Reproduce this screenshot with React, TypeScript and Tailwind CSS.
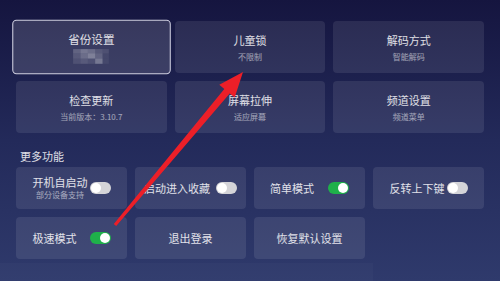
import React from 'react';

const font = { fontFamily: '"Noto Sans CJK SC", "Noto Sans", sans-serif' };

type TopItem = { title: string; sub?: string; mosaic?: boolean; selected?: boolean };

const topItems: TopItem[] = [
  { title: '省份设置', mosaic: true, selected: true },
  { title: '儿童锁', sub: '不限制' },
  { title: '解码方式', sub: '智能解码' },
  { title: '检查更新', sub: '当前版本：3.10.7' },
  { title: '屏幕拉伸', sub: '适应屏幕' },
  { title: '频道设置', sub: '频道菜单' },
];

function Mosaic() {
  // pixelated placeholder that hides the province name
  const cells = [
    'bg-white/20', 'bg-white/30', 'bg-white/25', 'bg-white/15', 'bg-white/10',
    'bg-white/15', 'bg-white/25', 'bg-white/35', 'bg-white/20', 'bg-white/5',
    'bg-white/10', 'bg-white/15', 'bg-white/10', 'bg-white/30', 'bg-white/5',
  ];
  return (
    <div className="grid grid-cols-5 w-[34px] h-[14px] mt-[3px]">
      {cells.map((c, i) => (
        <div key={i} className={c} />
      ))}
    </div>
  );
}

function Toggle({ on }: { on: boolean }) {
  return (
    <div
      className={`w-[21px] h-[12px] rounded-full flex items-center px-[1px] shrink-0 ${
        on ? 'bg-[#1fb04a] justify-end' : 'bg-[#d4d4d8] justify-start'
      }`}
    >
      <div className="w-[10px] h-[10px] rounded-full bg-white" />
    </div>
  );
}

type MoreItem = { title: string; sub?: string; toggle?: boolean; gap?: string };

const moreItems: MoreItem[] = [
  { title: '开机自启动', sub: '部分设备支持', toggle: false, gap: 'gap-[2px]' },
  { title: '启动进入收藏', toggle: false, gap: 'gap-[6px]' },
  { title: '简单模式', toggle: true, gap: 'gap-[14px]' },
  { title: '反转上下键', toggle: false, gap: 'gap-[2px]' },
  { title: '极速模式', toggle: true, gap: 'gap-[13px]' },
  { title: '退出登录' },
  { title: '恢复默认设置' },
];

export default function App() {
  return (
    <div
      className="relative w-[500px] h-[281px] overflow-hidden bg-gradient-to-b from-[#15153f] via-[#232a5a] to-[#2f3a6c]"
      style={font}
    >
      <div className="flex flex-col pt-[21px] px-[16px]">
        <div className="grid grid-cols-3 gap-2">
          {topItems.map((it) => (
            <div
              key={it.title}
              className={`h-[52px] rounded-[4px] flex flex-col items-center justify-center ${
                it.selected
                  ? 'scale-105 bg-white/[0.14] border-[1.5px] border-[#cfcfe0]'
                  : 'bg-white/[0.09]'
              }`}
            >
              <div className="text-[11px] leading-[14px] text-white/85">{it.title}</div>
              {it.mosaic ? (
                <Mosaic />
              ) : (
                <div className="text-[8px] leading-[11px] mt-[4px] text-white/55">{it.sub}</div>
              )}
            </div>
          ))}
        </div>

        <div className="mt-[16px] ml-[4px] text-[11px] leading-[14px] text-white/85">更多功能</div>

        <div className="grid grid-cols-4 gap-2 mt-[4px]">
          {moreItems.map((it) => (
            <div
              key={it.title}
              className={`h-[42px] rounded-[4px] bg-white/[0.09] flex items-center justify-center ${it.gap ?? ''}`}
            >
              <div className="flex flex-col items-center">
                <div className="text-[11px] leading-[13px] text-white/85">{it.title}</div>
                {it.sub && <div className="text-[8px] leading-[10px] mt-[1px] text-white/55">{it.sub}</div>}
              </div>
              {it.toggle !== undefined && <Toggle on={it.toggle} />}
            </div>
          ))}
        </div>

        <div className="-ml-[16px] mt-[4px] w-[373px] h-[20px] bg-white/[0.025]" />
      </div>

      <svg className="absolute inset-0 pointer-events-none" width="500" height="281" viewBox="0 0 500 281">
        <polygon
          points="243,72 234.7,97.6 229.7,93.4 116.2,226 113.8,224 224.3,89 219.3,84.8"
          fill="#ec1f28"
        />
      </svg>
    </div>
  );
}
